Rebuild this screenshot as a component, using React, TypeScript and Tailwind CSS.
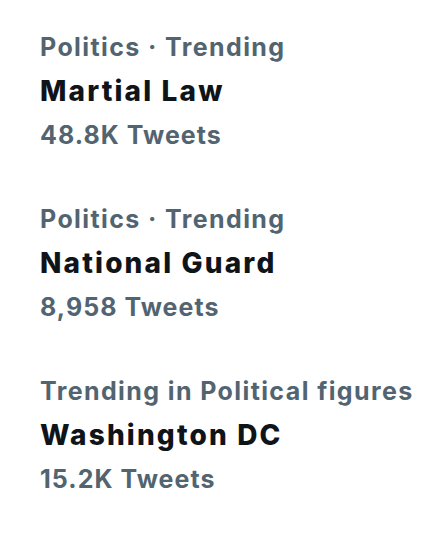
const TRENDS = [
  { context: "Politics · Trending", title: "Martial Law", count: "48.8K Tweets" },
  { context: "Politics · Trending", title: "National Guard", count: "8,958 Tweets" },
  { context: "Trending in Political figures", title: "Washington DC", count: "15.2K Tweets" },
]

export default function App() {
  return (
    <div className="min-h-screen bg-white px-10 pt-[25px] font-['Inter',sans-serif]">
      <div className="flex flex-col gap-10">
        {TRENDS.map((t) => (
          <div key={t.title} className="flex flex-col whitespace-nowrap">
            <p className="text-[25px] font-bold leading-[44px] tracking-[1.4px] text-[#536471]">{t.context}</p>
            <p className="text-[28px] font-extrabold leading-[44px] tracking-[2.15px] text-[#0f1419]">{t.title}</p>
            <p className="text-[25px] font-bold leading-[44px] tracking-[1.05px] text-[#536471]">{t.count}</p>
          </div>
        ))}
      </div>
    </div>
  )
}
